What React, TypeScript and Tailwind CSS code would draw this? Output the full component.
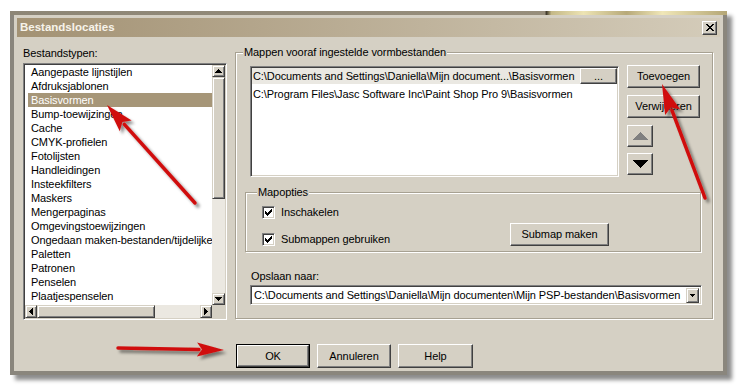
import React from "react";

const FONT = "font-['Liberation_Sans',Arial,sans-serif]";

// classic win 3d looks
const raised =
  "bg-[#d5d0c4] border border-t-white border-l-white border-r-[#404040] border-b-[#404040] shadow-[inset_-1px_-1px_0_#808080]";
const sunken =
  "border border-t-[#808080] border-l-[#808080] border-r-white border-b-white shadow-[inset_1px_1px_0_#404040,inset_-1px_-1px_0_#d5d0c4]";
const groupBox =
  "relative border border-[#a7a192] shadow-[inset_1px_1px_0_#fff,1px_1px_0_#fff]";

const FILE_TYPES = [
  "Aangepaste lijnstijlen",
  "Afdruksjablonen",
  "Basisvormen",
  "Bump-toewijzingen",
  "Cache",
  "CMYK-profielen",
  "Fotolijsten",
  "Handleidingen",
  "Insteekfilters",
  "Maskers",
  "Mengerpaginas",
  "Omgevingstoewijzingen",
  "Ongedaan maken-bestanden/tijdelijke",
  "Paletten",
  "Patronen",
  "Penselen",
  "Plaatjespenselen",
];

function Tri({ dir, color = "#000", w = 7, h = 4 }: { dir: "up" | "down" | "left" | "right"; color?: string; w?: number; h?: number }) {
  const horizontal = dir === "left" || dir === "right";
  const vw = horizontal ? h : w;
  const vh = horizontal ? w : h;
  const pts = {
    up: `0,${h} ${w / 2},0 ${w},${h}`,
    down: `0,0 ${w},0 ${w / 2},${h}`,
    left: `${h},0 ${h},${w} 0,${w / 2}`,
    right: `0,0 0,${w} ${h},${w / 2}`,
  }[dir];
  return (
    <svg width={vw} height={vh} viewBox={`0 0 ${vw} ${vh}`} shapeRendering="crispEdges">
      <polygon points={pts} fill={color} />
    </svg>
  );
}

function ScrollBtn({ dir, className }: { dir: "up" | "down" | "left" | "right"; className: string }) {
  return (
    <div
      className={`flex shrink-0 items-center justify-center bg-[#d5d0c4] border border-t-[#d5d0c4] border-l-[#d5d0c4] border-r-[#404040] border-b-[#404040] shadow-[inset_1px_1px_0_#fff,inset_-1px_-1px_0_#808080] ${className}`}
    >
      <Tri dir={dir} w={7} h={4} />
    </div>
  );
}

function Button({ children, className = "" }: { children: React.ReactNode; className?: string }) {
  return <div className={`flex items-center justify-center ${raised} ${className}`}>{children}</div>;
}

function CheckBox({ label }: { label: string }) {
  return (
    <div className="flex h-[13px] items-center gap-[6px]">
      <div className={`flex h-[13px] w-[13px] items-center justify-center bg-white ${sunken}`}>
        <svg width="7" height="7" viewBox="0 0 7 7" shapeRendering="crispEdges">
          <path d="M0 2h1v1h1v1h1V3h1V2h1V1h1V0h1v3h-1v1h-1v1h-1v1h-1v1H2V6H1V5H0z" fill="#000" />
        </svg>
      </div>
      <span>{label}</span>
    </div>
  );
}

function FileTypeList() {
  return (
    <div className={`flex h-[257px] w-[204px] flex-col bg-white p-[1px] ${sunken}`}>
      <div className="flex h-[240px]">
        <div className="w-[187px] overflow-hidden whitespace-nowrap">
          {FILE_TYPES.map((t) => (
            <div
              key={t}
              className={`ml-[3px] h-[14px] pl-[3px] leading-[14px] ${
                t === "Basisvormen" ? "bg-[#a69678] text-white" : ""
              }`}
            >
              {t}
            </div>
          ))}
        </div>
        <div className="flex w-[13px] flex-col">
          <ScrollBtn dir="up" className="h-[12px] w-[13px]" />
          <div className="h-[122px] w-[13px] bg-[#d5d0c4] border border-t-[#d5d0c4] border-l-[#d5d0c4] border-r-[#404040] border-b-[#404040] shadow-[inset_1px_1px_0_#fff,inset_-1px_-1px_0_#808080]" />
          <div className="flex-1 bg-[#ebe8e1]" />
          <ScrollBtn dir="down" className="h-[12px] w-[13px]" />
        </div>
      </div>
      <div className="flex h-[13px]">
        <div className="flex w-[187px]">
          <ScrollBtn dir="left" className="h-[13px] w-[12px]" />
          <div className="h-[13px] w-[118px] bg-[#d5d0c4] border border-t-[#d5d0c4] border-l-[#d5d0c4] border-r-[#404040] border-b-[#404040] shadow-[inset_1px_1px_0_#fff,inset_-1px_-1px_0_#808080]" />
          <div className="flex-1 bg-[#ebe8e1]" />
          <ScrollBtn dir="right" className="h-[13px] w-[12px]" />
        </div>
        <div className="w-[13px] bg-[#d5d0c4]" />
      </div>
    </div>
  );
}

function arrowShape(x1: number, y1: number, x2: number, y2: number, L: number, W: number) {
  const dx = x2 - x1;
  const dy = y2 - y1;
  const len = Math.hypot(dx, dy);
  const ux = dx / len;
  const uy = dy / len;
  const bx = x2 - ux * L;
  const by = y2 - uy * L;
  const nx = -uy;
  const ny = ux;
  return {
    line: `M${x1} ${y1} L${bx + ux * 2} ${by + uy * 2}`,
    head: `${x2},${y2} ${bx + nx * W},${by + ny * W} ${bx + ux * 5},${by + uy * 5} ${bx - nx * W},${by - ny * W}`,
  };
}

function RedArrows() {
  const arrows = [
    arrowShape(195, 203, 107, 105, 28, 8),
    arrowShape(705, 198, 662, 84, 30, 8),
    arrowShape(118, 348, 224, 350, 27, 7),
  ];
  return (
    <svg className="pointer-events-none absolute left-0 top-0" width="739" height="391" viewBox="0 0 739 391">
      <defs>
        <filter id="sh" x="-20%" y="-20%" width="140%" height="140%">
          <feDropShadow dx="3" dy="3" stdDeviation="1.6" floodColor="#000" floodOpacity="0.45" />
        </filter>
      </defs>
      <g filter="url(#sh)">
        {arrows.map((a, i) => (
          <g key={i}>
            <path d={a.line} stroke="#d0100e" strokeWidth="3.5" strokeLinecap="round" fill="none" />
            <polygon points={a.head} fill="#d0100e" />
          </g>
        ))}
      </g>
    </svg>
  );
}

export default function App() {
  return (
    <div className={`relative h-[391px] w-[739px] overflow-hidden bg-white text-[11px] leading-[13px] tracking-[-0.09px] text-black ${FONT}`}>
      <div className="ml-[10px] mt-[11px] flex h-[364px] w-[717px] flex-col border-x-[4px] border-b-[4px] border-[#8a867d] bg-[#d5d0c4] shadow-[5px_5px_4px_rgba(0,0,0,0.45)]">
        {/* top frame edge, with the window behind peeking through */}
        <div className="-mx-[4px] h-[4px] bg-[linear-gradient(90deg,#8d8676_0%,#978e7c_74.6%,#3d3729_74.8%,#c4b887_75.5%,#ede4b4_80%,#b7a979_86%,#f0e7b8_91%,#b4a675_100%)]" />

        {/* title bar */}
        <div className="mx-[3px] mt-[3px] flex h-[19px] items-center justify-between bg-gradient-to-r from-[#a39274] to-[#d4ccba] pl-[3px] pr-[3px]">
          <span className="text-[11.5px] font-bold tracking-normal text-[#f7f3ea]">Bestandslocaties</span>
          <div className={`flex h-[14px] w-[15px] items-center justify-center ${raised}`}>
            <svg width="8" height="7" viewBox="0 0 8 7" shapeRendering="crispEdges">
              <path d="M0 0h2l2 2.5L6 0h2L5 3.5 8 7H6L4 4.5 2 7H0l3-3.5z" fill="#000" />
            </svg>
          </div>
        </div>

        {/* main row */}
        <div className="flex items-start">
          <div className="ml-[9px] mt-[10px] w-[204px]">
            <div className="h-[13px]">Bestandstypen:</div>
            <div className="mt-[3px]">
              <FileTypeList />
            </div>
          </div>

          <div className={`ml-[8px] mt-[15px] h-[267px] w-[478px] ${groupBox}`}>
            <span className="absolute -top-[7px] left-[7px] bg-[#d5d0c4] px-[1px]">
              Mappen vooraf ingestelde vormbestanden
            </span>

            <div className="flex items-start">
              <div className={`ml-[14px] mt-[13px] h-[111px] w-[369px] bg-white p-[1px] ${sunken}`}>
                <div className="flex h-[16px] whitespace-nowrap">
                  <div className="flex flex-1 items-center bg-[#eae8e2] pl-[1px]">
                    C:\Documents and Settings\Daniella\Mijn document...\Basisvormen
                  </div>
                  <Button className="h-[16px] w-[37px]">...</Button>
                </div>
                <div className="mt-[2px] flex h-[16px] items-center whitespace-nowrap pl-[1px]">
                  C:\Program Files\Jasc Software Inc\Paint Shop Pro 9\Basisvormen
                </div>
              </div>

              <div className="ml-[8px] mt-[12px] flex w-[73px] flex-col">
                <Button className="h-[23px] w-[73px]">Toevoegen</Button>
                <Button className="mt-[7px] h-[23px] w-[73px]">Verwijderen</Button>
                <Button className="mt-[7px] h-[22px] w-[26px]">
                  <Tri dir="up" color="#808080" w={15} h={8} />
                </Button>
                <Button className="mt-[6px] h-[22px] w-[26px]">
                  <Tri dir="down" w={15} h={8} />
                </Button>
              </div>
            </div>

            <div className={`ml-[9px] mt-[15px] h-[60px] w-[456px] ${groupBox}`}>
              <span className="absolute -top-[7px] left-[11px] bg-[#d5d0c4] px-[1px]">Mapopties</span>
              <div className="flex items-start pl-[16px] pt-[13px]">
                <div className="flex flex-col">
                  <CheckBox label="Inschakelen" />
                  <div className="mt-[14px]">
                    <CheckBox label="Submappen gebruiken" />
                  </div>
                </div>
                <Button className="ml-auto mr-[91px] mt-[17px] h-[23px] w-[99px]">Submap maken</Button>
              </div>
            </div>

            <div className="ml-[15px] mt-[18px] h-[13px]">Opslaan naar:</div>
            <div className={`ml-[14px] mt-[2px] flex h-[20px] w-[452px] items-center bg-white p-[2px] ${sunken}`}>
              <span className="flex-1 whitespace-nowrap pl-[1px]">
                C:\Documents and Settings\Daniella\Mijn documenten\Mijn PSP-bestanden\Basisvormen
              </span>
              <div className="flex h-[15px] w-[13px] items-center justify-center bg-[#d5d0c4] border border-t-[#d5d0c4] border-l-[#d5d0c4] border-r-[#404040] border-b-[#404040] shadow-[inset_1px_1px_0_#fff,inset_-1px_-1px_0_#808080]">
                <Tri dir="down" w={5} h={3} />
              </div>
            </div>
          </div>
        </div>

        {/* dialog buttons */}
        <div className="ml-[222px] mt-[24px] flex gap-[7px]">
          <div className="h-[24px] w-[74px] border border-black">
            <Button className="h-full w-full">OK</Button>
          </div>
          <Button className="h-[24px] w-[74px]">Annuleren</Button>
          <Button className="h-[24px] w-[75px]">Help</Button>
        </div>
      </div>

      <RedArrows />
    </div>
  );
}
